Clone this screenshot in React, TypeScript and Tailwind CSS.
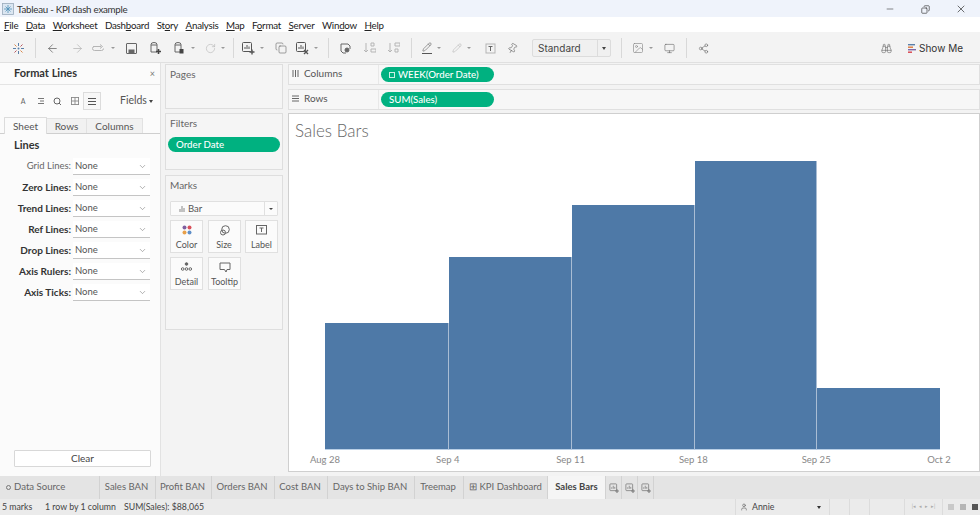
import React from "react";
import { ArrowLeft, ArrowRight, Minus, X, Copy, RotateCw, Pencil, Pin, Monitor, Share2, Binoculars, ChevronDown, User, Image as Img } from "lucide-react";

const font = "font-['Lato','Open_Sans',sans-serif]";

function Dot() {
  return <span className="mx-[5px] inline-block h-0 w-0 shrink-0 border-x-[2px] border-t-[2px] border-x-transparent border-t-[#999]" />;
}

function SheetIcon({ kind, color = "#555", className = "" }: { kind: "add" | "x"; color?: string; className?: string }) {
  return (
    <svg width="14" height="14" viewBox="0 0 14 14" fill="none" stroke={color} strokeWidth="1" className={`shrink-0 ${className}`}>
      <rect x="1.500" y="1.500" width="9" height="9" rx="1" />
      <path d="M4 8V6M6 8V4M8 8V5.500" />
      {kind === "add" && <path d="M11 8.500v5M8.500 11h5" strokeWidth="1.4" />}
      {kind === "x" && <path d="M9 9l4 4M13 9l-4 4" strokeWidth="1.4" />}
    </svg>
  );
}

function Tb({ children, w = "w-[24px]" }: { children: React.ReactNode; w?: string }) {
  return <div className={`flex h-full ${w} shrink-0 items-center justify-center`}>{children}</div>;
}
function Sep({ className = "ml-[5px] mr-[4px]" }: { className?: string }) {
  return <div className={`h-[20px] w-px shrink-0 bg-[#d8d8d8] ${className}`} />;
}

function Toolbar() {
  const c = "#666";
  const l = "#b5b5b5";
  return (
    <div className="flex h-[30px] shrink-0 items-center bg-[#f3f3f3] pl-[6px] pr-[17px] pt-[2px]">
      <Tb>
        <svg width="13" height="13" viewBox="0 0 13 13">
          <path d="M6.500 1v3M6.500 9v3M1 6.500h3M9 6.500h3" stroke="#5a7fa8" strokeWidth="1" />
          <path d="M2.500 2.500l2 2M8.500 8.500l2 2" stroke="#d9884a" strokeWidth="1" />
          <path d="M10.500 2.500l-2 2M4.500 8.500l-2 2" stroke="#b9575f" strokeWidth="1" />
          <circle cx="6.500" cy="6.500" r="1" fill="#5a7fa8" />
        </svg>
      </Tb>
      <Sep />
      <Tb w="w-[24px]"><ArrowLeft size={13} color={c} strokeWidth={1.4} /></Tb>
      <Tb w="w-[26px]"><ArrowRight size={13} color={l} strokeWidth={1.4} /></Tb>
      <Tb w="w-[32px]">
        <svg width="14" height="10" viewBox="0 0 14 10" fill="none" stroke={l} className="shrink-0"><path d="M1 3.500h8M8 1.500l2.500 2-2.500 2M3 3.500H2.500a2 2 0 0 0 0 4h7a2 2 0 0 0 2-2" /></svg>
        <Dot />
      </Tb>
      <Tb w="w-[18px]">
        <svg width="11" height="11" viewBox="0 0 11 11" fill="none" stroke={c}><rect x=".5" y=".5" width="10" height="10" rx=".5" /><rect x="2.500" y="6.500" width="6" height="4" fill={c} stroke="none" /></svg>
      </Tb>
      <Tb w="w-[30px]">
        <svg width="13" height="14" viewBox="0 0 13 14" fill="none" stroke={c}><path d="M2 3.500a3 2 0 0 1 6 0V11H2zM2 4h6" /><path d="M9.500 8v5M7 10.500h5" strokeWidth="1.6" stroke="#444" /></svg>
      </Tb>
      <Tb w="w-[32px]">
        <svg width="13" height="14" viewBox="0 0 13 14" fill="none" stroke={c} className="shrink-0"><path d="M2 3.500a3 2 0 0 1 6 0V11H2zM2 4h6" /><rect x="6.500" y="8" width="4" height="4.500" fill="#444" stroke="none" /></svg>
        <Dot />
      </Tb>
      <Tb w="w-[30px]">
        <RotateCw size={11} color={l} strokeWidth={1.3} className="shrink-0" />
        <Dot />
      </Tb>
      <Sep className="ml-[1px] mr-[4px]" />
      <Tb w="w-[34px]"><SheetIcon kind="add" /><Dot /></Tb>
      <Tb w="w-[18px]"><Copy size={12} color={c} strokeWidth={1.2} /></Tb>
      <Tb w="w-[38px]"><SheetIcon kind="x" /><Dot /></Tb>
      <Sep className="mr-[4px]" />
      <Tb w="w-[24px]">
        <svg width="13" height="13" viewBox="0 0 13 13" fill="none" stroke={c}><path d="M2 2h7l2 2v3M2 2v7l2 2h3" /><circle cx="8" cy="8" r="2" fill={c} /></svg>
      </Tb>
      <Tb w="w-[24px]">
        <svg width="13" height="12" viewBox="0 0 13 12" fill="none" stroke={l}><path d="M3 1v9M1 8l2 2 2-2M8 1h3v3H8zM8 7h5v3H8z" /></svg>
      </Tb>
      <Tb w="w-[24px]">
        <svg width="13" height="12" viewBox="0 0 13 12" fill="none" stroke={l}><path d="M3 1v9M1 8l2 2 2-2M8 1h5v3H8zM8 7h3v3H8z" /></svg>
      </Tb>
      <Sep className="ml-[6px] mr-[4px]" />
      <Tb w="w-[36px]"><div className="flex shrink-0 flex-col items-center"><Pencil size={10} color={c} strokeWidth={1.5} /><div className="mt-px h-px w-[10px] bg-[#555]" /></div><Dot /></Tb>
      <Tb w="w-[24px]"><Pencil size={10} color={l} strokeWidth={1.4} className="shrink-0" /><Dot /></Tb>
      <Tb w="w-[28px]">
        <svg width="11" height="11" viewBox="0 0 11 11" fill="none" stroke={l}><rect x="1" y="1" width="9" height="9" /><path d="M3.500 3.500h4M5.500 3.500v4.500" stroke={c} /></svg>
      </Tb>
      <Tb w="w-[16px]"><Pin size={11} color={c} strokeWidth={1.3} className="shrink-0 rotate-[30deg]" /></Tb>
      <div className="ml-[12px] flex h-[18px] w-[79px] shrink-0 items-center rounded-[2px] border border-[#dcdcdc] bg-[#f0f0f0]">
        <span className="flex-1 pl-[5px] text-[10px] text-[#444] font-['Inter',sans-serif]">Standard</span>
        <div className="flex h-full w-[13px] items-center justify-center border-l border-[#dcdcdc]">
          <span className="h-0 w-0 border-x-[2.500px] border-t-[3px] border-x-transparent border-t-[#444]" />
        </div>
      </div>
      <Sep className="ml-[10px] mr-[4px]" />
      <Tb w="w-[38px]"><Img size={12} color="#888" strokeWidth={1.3} className="shrink-0" /><Dot /></Tb>
      <Tb w="w-[10px]"><Monitor size={11} color={c} strokeWidth={1.3} className="shrink-0" /></Tb>
      <Sep className="ml-[12px] mr-[4px]" />
      <Tb w="w-[24px]"><Share2 size={11} color={c} strokeWidth={1.3} /></Tb>
      <div className="flex-1" />
      <Binoculars size={11} color={c} strokeWidth={1.3} />
      <div className="ml-[16px] flex items-center gap-[3px]">
        <svg width="8" height="9" viewBox="0 0 8 9">
          <rect y="0" width="7" height="1.400" fill="#5a7fa8" />
          <rect y="2.500" width="5" height="1.400" fill="#e07a3a" />
          <rect y="5" width="8" height="1.400" fill="#7f6aa8" />
          <rect y="7.500" width="4" height="1.400" fill="#d9424a" />
        </svg>
        <span className="text-[10px] text-[#333] font-['Inter',sans-serif]">Show Me</span>
      </div>
    </div>
  );
}

const lines: [string, boolean][] = [
  ["Grid Lines:", false],
  ["Zero Lines:", true],
  ["Trend Lines:", true],
  ["Ref Lines:", true],
  ["Drop Lines:", true],
  ["Axis Rulers:", true],
  ["Axis Ticks:", true],
];

function FormatPane() {
  return (
    <div className={`flex w-[161px] shrink-0 flex-col border-r border-[#e2e2e2] bg-[#fbfbfb] ${font}`}>
      <div className="flex h-[22px] items-center justify-between border-b border-[#e4e4e4] pl-[14px] pr-[5px]">
        <span className="text-[11px] font-bold text-[#333]">Format Lines</span>
        <span className="text-[9px] leading-none text-[#777]">×</span>
      </div>
      <div className="mt-[7px] flex h-[18px] items-center pl-[14px]">
        <div className="flex w-[18px] justify-center text-[7px] text-[#666]">A</div>
        <div className="flex w-[17px] justify-center"><svg width="8" height="8" viewBox="0 0 8 8" stroke="#777"><path d="M1 1.500h6M3 4h4M1 6.500h6" /></svg></div>
        <div className="flex w-[17px] justify-center"><svg width="9" height="9" viewBox="0 0 9 9" fill="none" stroke="#666"><circle cx="4" cy="4" r="3" /><path d="M6 6l2 2" /></svg></div>
        <div className="flex w-[17px] justify-center"><svg width="8" height="8" viewBox="0 0 9 9" fill="none" stroke="#888"><rect x=".5" y=".5" width="8" height="8" /><path d="M4.500.5v8M.5 4.500h8" /></svg></div>
        <div className="flex h-[18px] w-[18px] items-center justify-center border border-[#dcdcdc] bg-[#f7f7f7]">
          <svg width="8" height="7" viewBox="0 0 8 7" stroke="#555"><path d="M0 .5h8M0 3.500h8M0 6.500h8" /></svg>
        </div>
        <span className="ml-[19px] text-[10.500px] text-[#555]">Fields</span>
        <span className="ml-[2px] h-0 w-0 border-x-[2.500px] border-t-[3px] border-x-transparent border-t-[#444]" />
      </div>
      <div className="mt-[8px] flex h-[16px] items-end border-b border-[#cfcfcf] pl-[4px] text-[10px] text-[#555]">
        <div className="relative -mb-px flex h-[17px] w-[43px] items-center justify-center rounded-t-[1px] border-x border-t border-[#dcdcdc] bg-[#fbfbfb]">Sheet</div>
        <div className="flex h-[15px] w-[40px] items-center justify-center border-r border-t border-[#e2e2e2] bg-[#f1f1f1]">Rows</div>
        <div className="flex h-[15px] w-[56px] items-center justify-center border-r border-t border-[#e2e2e2] bg-[#f1f1f1]">Columns</div>
      </div>
      <div className="mt-[4px] pl-[14px] text-[11px] font-bold leading-[14px] text-[#333]">Lines</div>
      <div className="mt-[6px] flex flex-col gap-[4px]">
        {lines.map(([n, b]) => (
          <div key={n} className="flex h-[17px] items-center">
            <span className={`w-[71px] text-right ${b ? "text-[10px] font-bold text-[#333]" : "text-[9.500px] text-[#666]"}`}>{n}</span>
            <div className="ml-[2px] flex h-[17px] w-[77px] items-center justify-between border-b border-[#c4c4c4] bg-white pl-[2px] pr-[3px] text-[9.500px] text-[#555]">
              None
              <ChevronDown size={9} color="#777" strokeWidth={1.5} />
            </div>
          </div>
        ))}
      </div>
      <div className="flex-1" />
      <div className="mb-[9px] ml-[14px] mr-[9px] flex h-[17px] items-center justify-center rounded-[1px] border border-[#d8d8d8] bg-white text-[10px] text-[#444]">Clear</div>
    </div>
  );
}

function Card({ label, icon }: { label: string; icon: React.ReactNode }) {
  return (
    <div className="flex h-[33px] w-[33px] flex-col items-center justify-between border border-[#e0e0e0] bg-[#fbfbfb] pb-[2px] pt-[4px] text-[9px] leading-[10px] text-[#555]">
      {icon}
      <span>{label}</span>
    </div>
  );
}

const paneCls = "border border-[#dedede] bg-[#f5f5f5] text-[10px] leading-[13px] text-[#666]";

function MiddlePane() {
  return (
    <div className={`flex w-[118px] shrink-0 flex-col ${font}`}>
      <div className={`h-[45px] px-[4px] py-[3px] ${paneCls}`}>Pages</div>
      <div className={`mt-[4px] h-[57px] px-[2px] py-[3px] ${paneCls}`}>
        <div className="pl-[2px]">Filters</div>
        <div className="mt-[7px] flex h-[15px] items-center rounded-full bg-[#00b180] pl-[8px] text-[9.700px] font-medium text-white">Order Date</div>
      </div>
      <div className={`mt-[5px] flex h-[155px] flex-col px-[4px] py-[3px] ${paneCls}`}>
        <div>Marks</div>
        <div className="mt-[9px] flex h-[15px] items-center rounded-[1px] border border-[#e0e0e0] bg-[#fbfbfb]">
          <svg className="ml-[8px]" width="6" height="6" viewBox="0 0 6 6" stroke="#888"><path d="M1 6V3M3 6V0M5 6V2" /></svg>
          <span className="ml-[3px] flex-1 text-[9.500px] text-[#555]">Bar</span>
          <div className="flex h-full w-[13px] items-center justify-center border-l border-[#e0e0e0]">
            <span className="h-0 w-0 border-x-[2px] border-t-[2px] border-x-transparent border-t-[#444]" />
          </div>
        </div>
        <div className="mt-[4px] flex justify-between">
          <Card label="Color" icon={<svg width="10" height="10" viewBox="0 0 10 10"><circle cx="2.500" cy="2.500" r="2" fill="#7f5f9f" /><circle cx="7.500" cy="2.500" r="2" fill="#d9505a" /><circle cx="2.500" cy="7.500" r="2" fill="#e8a04a" /><circle cx="7.500" cy="7.500" r="2" fill="#5f8fc8" /></svg>} />
          <Card label="Size" icon={<svg width="11" height="11" viewBox="0 0 11 11" fill="none" stroke="#666"><circle cx="6.500" cy="4.500" r="3.800" /><circle cx="4" cy="7.500" r="2.500" /></svg>} />
          <Card label="Label" icon={<svg width="11" height="10" viewBox="0 0 11 10" fill="none" stroke="#666"><rect x=".5" y=".5" width="10" height="8.500" /><path d="M3.500 3h4M5.500 3v4" /></svg>} />
        </div>
        <div className="mt-[4px] flex gap-[5px]">
          <Card label="Detail" icon={<svg width="11" height="10" viewBox="0 0 11 10" fill="none" stroke="#666"><circle cx="5.500" cy="2" r="1.300" fill="#666" /><circle cx="1.700" cy="7" r="1.300" /><circle cx="5.500" cy="7" r="1.300" /><circle cx="9.300" cy="7" r="1.300" /></svg>} />
          <Card label="Tooltip" icon={<svg width="12" height="11" viewBox="0 0 12 11" fill="none" stroke="#666"><path d="M1 1h10v6.500H8L7 10 5.500 7.500H1z" /></svg>} />
        </div>
      </div>
    </div>
  );
}

function Shelf({ icon, label, pill, className = "" }: { icon: React.ReactNode; label: string; pill: React.ReactNode; className?: string }) {
  return (
    <div className={`flex h-[21px] shrink-0 items-center border border-[#e0e0e0] bg-[#f7f7f7] ${font} ${className}`}>
      <div className="flex h-full w-[90px] items-center border-r border-[#e8e8e8] pb-[2px] pl-[3px] text-[10px] text-[#555]">
        {icon}
        <span className="ml-[5px]">{label}</span>
      </div>
      <div className="ml-[2px] flex h-[15px] w-[113px] items-center rounded-full bg-[#00b180] pl-[8px] text-[9.700px] font-medium text-white">{pill}</div>
    </div>
  );
}

const bars = [
  { h: 127, c: "w-[124px] border-r border-[#a9bdd4]" },
  { h: 193, c: "w-[123px] border-r border-[#a9bdd4]" },
  { h: 245, c: "w-[123px] border-r border-[#a9bdd4]" },
  { h: 289, c: "w-[122px] border-r border-[#a9bdd4]" },
  { h: 62, c: "w-[123px]" },
];
const ticks = ["Aug 28", "Sep 4", "Sep 11", "Sep 18", "Sep 25", "Oct 2"];

function View() {
  return (
    <div className={`mt-[3px] flex min-h-0 flex-1 flex-col border border-[#cfcfcf] bg-white ${font}`}>
      <div className="h-[47px] pl-[6px] pt-[6px] text-[17px] font-light leading-[22px] text-[#666]">Sales Bars</div>
      <div className="flex h-[289px] items-end pl-[36px]">
        {bars.map((b, i) => (
          <div key={i} style={{ height: b.h }} className={`${b.c} border-b border-b-[#b9cfe6] bg-[#4e79a7]`} />
        ))}
      </div>
      <div className="flex justify-between pl-[16px] pr-[20px] pt-[3px] text-[9.500px] leading-[13px] text-[#888]">
        {ticks.map((t) => <span key={t} className="w-[40px] text-center">{t}</span>)}
      </div>
    </div>
  );
}

const tabs: [string, string][] = [
  ["Sales BAN", "w-[56px]"],
  ["Profit BAN", "w-[56px]"],
  ["Orders BAN", "w-[63px]"],
  ["Cost BAN", "w-[53px]"],
  ["Days to Ship BAN", "w-[87px]"],
  ["Treemap", "w-[49px]"],
];

function Tabs() {
  return (
    <div className={`flex h-[23px] shrink-0 items-stretch bg-[#e4e4e4] text-[9.500px] text-[#666] ${font}`}>
      <div className="flex w-[100px] items-center border-r border-[#d2d2d2] pl-[6px]">
        <span className="h-[5px] w-[5px] rounded-full border border-[#777]" />
        <span className="ml-[3px] text-[9.600px]">Data Source</span>
      </div>
      {tabs.map(([t, w]) => (
        <div key={t} className={`flex ${w} items-center justify-center border-r border-[#d2d2d2] pr-[2px]`}>{t}</div>
      ))}
      <div className="flex w-[84px] items-center justify-center border-r border-[#d2d2d2]">⊞ KPI Dashboard</div>
      <div className="flex w-[57px] items-center justify-center bg-[#f5f5f5] font-bold text-[#444]">Sales Bars</div>
      <div className="flex w-[17px] items-center justify-center border-x border-[#d2d2d2]"><SheetIcon kind="add" color="#777" className="scale-75" /></div>
      <div className="flex w-[16px] items-center justify-center border-r border-[#d2d2d2]"><SheetIcon kind="add" color="#777" className="scale-75" /></div>
      <div className="flex w-[16px] items-center justify-center border-r border-[#d2d2d2]"><SheetIcon kind="add" color="#777" className="scale-75" /></div>
    </div>
  );
}

function Status() {
  return (
    <div className={`flex h-[16px] shrink-0 items-center bg-[#ebebeb] pl-[2px] text-[8.750px] text-[#444] ${font}`}>
      <span className="w-[43px]">5 marks</span>
      <span className="w-[79px]">1 row by 1 column</span>
      <span>SUM(Sales): $88,065</span>
      <div className="flex-1" />
      <div className="flex h-full w-[95px] items-center border-x border-[#dcdcdc] pl-[4px]">
        <User size={8} color="#666" />
        <span className="ml-[4px] flex-1">Annie</span>
        <span className="mr-[8px] h-0 w-0 border-x-[2.500px] border-t-[3px] border-x-transparent border-t-[#333]" />
      </div>
      <div className="h-full w-[20px] border-r border-[#dcdcdc]" />
      <div className="h-full w-[20px] border-r border-[#dcdcdc]" />
      <div className="h-full w-[35px] border-r border-[#dcdcdc]" />
      <div className="flex h-full w-[38px] items-center justify-center gap-[3px] border-r border-[#dcdcdc] text-[5px] text-[#aaa]">
        <span>|◂</span><span>◂</span><span>▸</span><span>▸|</span>
      </div>
      <div className="flex w-[37px] items-center gap-[6px] pl-[5px]">
        <span className="h-[6px] w-[6px] bg-[#c9c9c9]" />
        <span className="h-[6px] w-[6px] bg-[#b5b5b5]" />
        <span className="h-[6px] w-[6px] bg-[#555]" />
      </div>
    </div>
  );
}

export default function App() {
  const menu = [
    ["F", "ile"], ["D", "ata"], ["W", "orksheet"], ["Dash", "board", 1], ["St", "ory", 1], ["A", "nalysis"], ["M", "ap"], ["F", "ormat", 1], ["S", "erver"], ["Win", "dow", 1], ["H", "elp"],
  ] as const;
  return (
    <div className="flex h-[515px] w-[980px] flex-col overflow-hidden bg-[#f3f3f3]">
      <div className="flex h-[17px] shrink-0 items-center bg-[#eff3fb] pl-[2px] pr-[13px] pt-px font-['Lato',sans-serif]">
        <svg width="12" height="12" viewBox="0 0 12 12" fill="none" stroke="#4e8fb8" strokeWidth=".8">
          <rect x=".5" y=".5" width="11" height="11" fill="#dbe6f2" stroke="#9ab" />
          <path d="M6 2v8M2 6h8M3.500 3.500l5 5M8.500 3.500l-5 5" />
        </svg>
        <span className="ml-[3px] text-[9.750px] tracking-[-0.25px] text-[#333]">Tableau - KPI dash example</span>
        <div className="flex-1" />
        <Minus size={10} color="#333" strokeWidth={1.4} />
        <Copy size={9} color="#222" strokeWidth={1.6} className="ml-[26px] -scale-x-100" />
        <X size={12} color="#222" strokeWidth={1.3} className="ml-[25px]" />
      </div>
      <div className="flex h-[15px] shrink-0 items-center gap-[7.500px] bg-white pl-[4px] pt-[2px] text-[9.750px] tracking-[-0.25px] text-[#222] font-['Lato',sans-serif]">
        {menu.map(([a, b, c]) => (
          <span key={a + b}>
            {c ? <>{a}<span className="underline">{b[0]}</span>{b.slice(1)}</> : <><span className="underline">{a}</span>{b}</>}
          </span>
        ))}
      </div>
      <Toolbar />
      <div className="flex min-h-0 flex-1 border-t border-[#e0e0e0] bg-[#f3f3f3]">
        <FormatPane />
        <div className="ml-[4px] pt-[1px]"><MiddlePane /></div>
        <div className="ml-[5px] flex min-w-0 flex-1 flex-col pb-[4px] pt-[1px]">
          <Shelf
            label="Columns"
            icon={<svg width="7" height="7" viewBox="0 0 7 7" stroke="#666"><path d="M1 0v7M3.500 0v7M6 0v7" /></svg>}
            pill={<><span className="mr-[3px] inline-flex h-[6px] w-[6px] border border-white/80" />WEEK(Order Date)</>}
          />
          <Shelf
            className="mt-[4px]"
            label="Rows"
            icon={<svg width="7" height="7" viewBox="0 0 7 7" stroke="#666"><path d="M0 1h7M0 3.500h7M0 6h7" /></svg>}
            pill="SUM(Sales)"
          />
          <View />
        </div>
      </div>
      <Tabs />
      <Status />
    </div>
  );
}
